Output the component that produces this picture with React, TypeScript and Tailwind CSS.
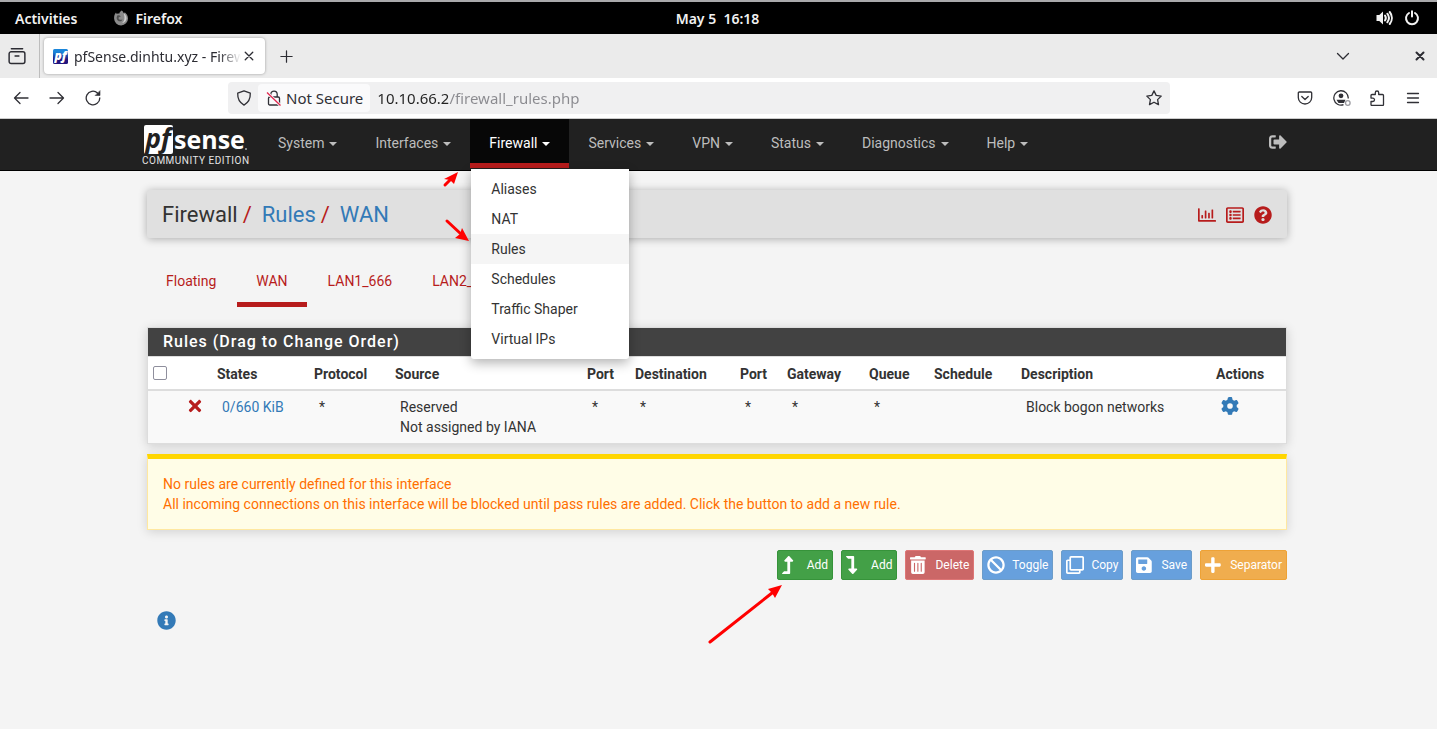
import type { ReactNode } from 'react';
import {
  FaBan,
  FaInfoCircle,
  FaLevelDownAlt,
  FaLevelUpAlt,
  FaPlus,
  FaQuestionCircle,
  FaRegChartBar,
  FaRegClone,
  FaRegListAlt,
  FaSave,
  FaSignOutAlt,
  FaTimes,
  FaTrashAlt,
} from 'react-icons/fa';
import { FaGear } from 'react-icons/fa6';

function Line({ children, size = 16, width = 1.3 }: { children: ReactNode; size?: number; width?: number }) {
  return (
    <svg
      width={size}
      height={size}
      viewBox="0 0 16 16"
      fill="none"
      stroke="currentColor"
      strokeWidth={width}
      strokeLinecap="round"
      strokeLinejoin="round"
      aria-hidden="true"
    >
      {children}
    </svg>
  );
}

function TopBar() {
  return (
    <header className="flex h-[34px] items-center border-t-2 border-[#a9a9ab] bg-black px-[15px] text-[14px] font-semibold text-[#f2f2f2]">
      <div className="flex flex-1 items-center gap-9">
        <button type="button">Activities</button>
        <button type="button" className="flex items-center gap-[6px]">
          <svg width="16" height="16" viewBox="0 0 16 16" aria-hidden="true">
            <path
              d="M8.6.6c1.2.8 1.8 1.7 2.1 2.8.6-.1.9-.6 1-1.100 1.800 1.500 3.300 3.400 3.300 6.100a6.900 6.900 0 0 1-13.900.2C1 6 1.700 4 3 2.600c.1.7.4 1.100.9 1.400.7-.4 1.500-.5 2.300-.3C6.500 2.500 7.300 1.400 8.600.6z"
              fill="#8b8b8b"
            />
            <path d="M10.500 3.200c1.700.9 3 2.500 3 4.900 0 3-2.300 5.100-5 5.100 2.900-1.300 4-5.300 2-10z" fill="#d0d0d0" />
            <path d="M4.300 5.400c1.300-.5 2.600-.1 3.600 1-1.500 0-1.700.9-2.500 1.300.1 1.800 2.300 2.800 4 1.500-.5 1.900-2.100 2.500-3.500 2-2.200-.8-2.900-3.600-1.600-5.800z" fill="#4c4c4c" />
          </svg>
          Firefox
        </button>
      </div>
      <button type="button">May 5&nbsp; 16:18</button>
      <div className="flex flex-1 items-center justify-end gap-[10px] pr-[2px]">
        <button type="button" aria-label="Volume">
          <svg width="18" height="16" viewBox="0 0 18 16" fill="none" stroke="currentColor" strokeWidth="2" strokeLinecap="round" aria-hidden="true">
            <path d="M.5 5h2.800L7 1.500v13L3.300 11H.5z" fill="currentColor" stroke="none" />
            <path d="M9 5.500c1 1.500 1 3.500 0 5M11.300 3.700c2 2.600 2 6 0 8.600M13.700 2c2.900 3.600 2.900 8.400 0 12" />
          </svg>
        </button>
        <button type="button" aria-label="Power">
          <Line width={2}>
            <path d="M5 3a6 6 0 1 0 6 0M8 1.200v5.300" />
          </Line>
        </button>
      </div>
    </header>
  );
}

function TabStrip() {
  return (
    <div className="flex h-11 items-center bg-[#ebebeb] text-[#2c2c33]">
      <button type="button" aria-label="View recent browsing" className="flex h-full w-10 items-center border-r border-[#bdbdbd] pl-2">
        <Line size={18}>
          <rect x="1" y="4.300" width="14" height="10.300" rx="1.700" />
          <path d="M3 1.500h10M6.300 8h3.400" />
        </Line>
      </button>
      <div className="ml-1 flex h-9 w-[221px] items-center rounded bg-white pr-[10px] pl-[9px] shadow-[0_0_3px_rgba(0,0,0,0.35)]">
        <svg width="15" height="15" viewBox="0 0 15 15" className="mr-[6px] shrink-0" aria-hidden="true">
          <defs>
            <linearGradient id="favicon" x1="0" y1="0" x2="0" y2="1">
              <stop offset="0.2" stopColor="#1b86da" />
              <stop offset="0.7" stopColor="#22157e" />
            </linearGradient>
          </defs>
          <rect width="15" height="15" rx="1.500" fill="url(#favicon)" />
          <text x="7.500" y="11" textAnchor="middle" fontFamily="Open Sans, sans-serif" fontSize="12" fontWeight="800" fontStyle="italic" fill="#fff">
            pf
          </text>
        </svg>
        <span className="min-w-0 flex-1 overflow-hidden text-[14px] whitespace-nowrap [mask-image:linear-gradient(to_left,transparent,black_22px)]">
          pfSense.dinhtu.xyz - Firewall
        </span>
        <button type="button" aria-label="Close tab" className="ml-[2px]">
          <Line size={12} width={1.800}>
            <path d="M3 3l10 10M13 3L3 13" />
          </Line>
        </button>
      </div>
      <button type="button" aria-label="New tab" className="ml-[14px]">
        <Line size={15}>
          <path d="M8 2v12M2 8h12" />
        </Line>
      </button>
      <button type="button" aria-label="List all tabs" className="mr-[62px] ml-auto">
        <Line size={16}>
          <path d="M2.500 5.500L8 11l5.500-5.500" />
        </Line>
      </button>
      <button type="button" aria-label="Close window" className="mr-[10px]">
        <Line size={14} width={2.300}>
          <path d="M4 4l8 8M12 4l-8 8" />
        </Line>
      </button>
    </div>
  );
}

function AddressBar() {
  return (
    <div className="flex h-[41px] items-center border-b border-[#ccc] bg-white pr-4 text-[15px] text-[#303036]">
      <div className="flex shrink-0 items-center gap-5 pl-[13px]">
        <button type="button" aria-label="Back">
          <Line>
            <path d="M15 8H1.500M7 2.500L1.500 8 7 13.500" />
          </Line>
        </button>
        <button type="button" aria-label="Forward">
          <Line>
            <path d="M1 8h13.500M9 2.500L14.500 8 9 13.500" />
          </Line>
        </button>
        <button type="button" aria-label="Reload">
          <Line>
            <path d="M14.800 8A6.800 6.800 0 1 1 12.500 2.900L14 4.300" />
            <path d="M15 1v4.500h-4.500z" fill="currentColor" strokeWidth="0.600" />
          </Line>
        </button>
      </div>
      <div className="ml-[127px] flex h-8 min-w-0 flex-1 items-center rounded bg-[#f0f0f1] pr-2 pl-2">
        <Line>
          <path d="M8 .8l6.300 2.300c.2 5.400-1.500 9.500-6.300 12C3.200 12.600 1.500 8.500 1.700 3.100z" />
        </Line>
        <button type="button" className="ml-[6px] flex h-7 items-center gap-1 rounded bg-[#fafafb] pr-[7px] pl-2">
          <svg width="16" height="16" viewBox="0 0 16 16" fill="none" stroke="currentColor" strokeWidth="1.300" aria-hidden="true">
            <rect x="2.500" y="7" width="11" height="8" rx="1.300" />
            <path d="M4.800 7V4.300a3.200 3.200 0 0 1 6.400 0V7" />
            <path d="M1 2.500L14.500 15.500" stroke="#fafafb" strokeWidth="3" />
            <path d="M1 2.500L14.500 15.500" stroke="#e22850" strokeWidth="1.300" />
          </svg>
          Not Secure
        </button>
        <input
          aria-label="Address"
          defaultValue="10.10.66.2/firewall_rules.php"
          className="ml-[7px] min-w-0 flex-1 bg-linear-to-r from-[#222] from-[71px] to-[#8a8a8f] to-[71px] bg-clip-text text-transparent outline-none"
        />
        <button type="button" aria-label="Bookmark this page">
          <Line>
            <path d="M8 .9l2.200 4.500 5 .7-3.600 3.500.9 5L8 12.200l-4.500 2.400.9-5L.8 6.100l5-.7z" />
          </Line>
        </button>
      </div>
      <div className="ml-[127px] flex shrink-0 items-center gap-5">
        <button type="button" aria-label="Save to Pocket">
          <Line>
            <path d="M2.300 2h11.400a1 1 0 0 1 1 1v4.500a6.700 6.500 0 0 1-13.400 0V3a1 1 0 0 1 1-1z" />
            <path d="M4.800 6.500L8 9.500l3.200-3" />
          </Line>
        </button>
        <button type="button" aria-label="Account">
          <svg width="18" height="16" viewBox="0 0 18 16" fill="none" stroke="currentColor" strokeWidth="1.300" className="-mr-[2px]" aria-hidden="true">
            <path d="M10.500 14.700A7.200 7.200 0 1 1 15.200 8.500" />
            <circle cx="8" cy="5.800" r="2.400" fill="currentColor" stroke="none" />
            <path d="M3.500 9.700h9l-1.500 3.200H5.500z" fill="currentColor" stroke="none" />
            <circle cx="14.800" cy="13" r="2.300" stroke="#9a9aa0" />
          </svg>
        </button>
        <button type="button" aria-label="Extensions">
          <Line>
            <path d="M6.300 4.500V2.700a1.700 1.700 0 0 1 3.400 0v1.800h3.800a1 1 0 0 1 1 1v9a1 1 0 0 1-1 1H3a1 1 0 0 1-1-1v-3h1.800a1.700 1.700 0 0 0 0-3.400H2V5.500a1 1 0 0 1 1-1z" />
          </Line>
        </button>
        <button type="button" aria-label="Open application menu">
          <Line size={16}>
            <path d="M2.500 3.500h11M2.500 8h11M2.500 12.500h11" />
          </Line>
        </button>
      </div>
    </div>
  );
}

const container = 'mx-auto max-w-[1140px]';
const menus = ['System', 'Interfaces', 'Firewall', 'Services', 'VPN', 'Status', 'Diagnostics', 'Help'];
const firewallItems = ['Aliases', 'NAT', 'Rules', 'Schedules', 'Traffic Shaper', 'Virtual IPs'];

function MenuButton({ label, active }: { label: string; active: boolean }) {
  return (
    <button
      type="button"
      className={
        active
          ? 'flex h-[49px] items-center gap-[5px] border-b-[5px] border-[#b71c1c] bg-[#070707] px-[19px] pt-1 text-white'
          : 'flex h-[49px] items-center gap-[5px] border-b-[5px] border-transparent px-[19px] pt-1 text-[#bdbdbd]'
      }
    >
      {label}
      <span className="mt-[2px] border-x-4 border-t-4 border-x-transparent border-t-current" />
    </button>
  );
}

function Navbar() {
  return (
    <nav className="border-b border-black bg-[#212121] pr-[3px] text-[14px]">
      <div className={container}>
        <div className="flex h-[51px] items-start">
          <a href="#home" className="-ml-[6px] block w-[118px] shrink-0 pt-[6px] text-white">
            <svg width="110" height="30" viewBox="0 0 110 30" fontFamily="Open Sans, sans-serif" fontWeight="700" fill="#fff" aria-hidden="true">
              <rect x="3" width="29" height="29" rx="2" />
              <text x="17" y="23" textAnchor="middle" fontSize="26" fontStyle="italic" fill="#212121">
                pf
              </text>
              <text x="33" y="24" fontSize="25">
                sense
              </text>
              <circle cx="105" cy="24" r="1" fill="#aaa" />
            </svg>
            <span className="block pl-px text-[10px] leading-[12px] tracking-wider whitespace-nowrap text-[#e4e4e4]">COMMUNITY EDITION</span>
          </a>
          <ul className="flex">
            {menus.map((m) => (
              <li key={m} className="relative">
                <MenuButton label={m} active={m === 'Firewall'} />
                {m === 'Firewall' && (
                  <ul className="absolute top-[50px] left-px z-20 w-[158px] rounded-b-[3px] bg-white py-[5px] shadow-[0_4px_12px_rgba(0,0,0,0.3)]">
                    {firewallItems.map((item) => (
                      <li key={item}>
                        <a
                          href="#menu"
                          className={
                            item === 'Rules'
                              ? 'block bg-[#f5f5f5] px-5 py-[5px] leading-5 text-[#333]'
                              : 'block px-5 py-[5px] leading-5 text-[#333]'
                          }
                        >
                          {item}
                        </a>
                      </li>
                    ))}
                  </ul>
                )}
              </li>
            ))}
          </ul>
          <a href="#logout" aria-label="Log out" className="mt-[14px] ml-auto text-[18px] text-[#bdbdbd]">
            <FaSignOutAlt />
          </a>
        </div>
      </div>
    </nav>
  );
}

function PageHeader() {
  return (
    <header className="flex h-12 items-center justify-between rounded-[2px] bg-[#e0e0e0] px-[15px] pt-[2px] shadow-[0_1px_8px_rgba(0,0,0,0.3)]">
      <ol className="flex text-[22px] text-[#333]">
        <li>
          Firewall<span className="mr-[10px] ml-[5px] text-[#b71c1c]">/</span>
        </li>
        <li>
          <a href="#rules" className="text-[#337ab7]">
            Rules
          </a>
          <span className="mr-[10px] ml-[5px] text-[#b71c1c]">/</span>
        </li>
        <li>
          <a href="#wan" className="text-[#337ab7]">
            WAN
          </a>
        </li>
      </ol>
      <div className="flex gap-[10px] text-[18px] text-[#b71c1c]">
        <a href="#status" aria-label="Related status">
          <FaRegChartBar />
        </a>
        <a href="#log" aria-label="Related log entries">
          <FaRegListAlt />
        </a>
        <a href="#help" aria-label="Help">
          <FaQuestionCircle />
        </a>
      </div>
    </header>
  );
}

function InterfaceTabs() {
  return (
    <ul className="mt-[18px] flex text-[#b71c1c]">
      {['Floating', 'WAN', 'LAN1_666', 'LAN2_668'].map((t) => (
        <li key={t} className="mr-[2px]">
          <a
            href="#tab"
            className={
              t === 'WAN'
                ? 'flex h-[51px] items-center border-b-[5px] border-[#b71c1c] px-[19px] pt-1'
                : 'flex h-[51px] items-center border-b-[5px] border-transparent px-[19px] pt-1'
            }
          >
            {t}
          </a>
        </li>
      ))}
    </ul>
  );
}

function RulesTable() {
  const head = ['States', 'Protocol', 'Source', 'Port', 'Destination', 'Port', 'Gateway', 'Queue', 'Schedule', 'Description', 'Actions'];
  return (
    <section className="mt-5 border border-[#ddd] bg-white shadow-[0_2px_10px_rgba(0,0,0,0.16)]">
      <h2 className="h-7 bg-[#424242] px-[15px] text-[16px] leading-[27px] font-medium tracking-[1px] text-white">
        Rules (Drag to Change Order)
      </h2>
      <table className="w-full table-fixed border-t border-[#ddd] text-left text-[#333]">
        <colgroup>
          <col className="w-[30px]" />
          <col className="w-[34px]" />
          <col className="w-[97px]" />
          <col className="w-[81px]" />
          <col className="w-[192px]" />
          <col className="w-[48px]" />
          <col className="w-[105px]" />
          <col className="w-[47px]" />
          <col className="w-[82px]" />
          <col className="w-[65px]" />
          <col className="w-[87px]" />
          <col className="w-[195px]" />
          <col className="w-[75px]" />
        </colgroup>
        <thead>
          <tr className="h-[33px] border-b-2 border-[#ddd]">
            <th className="px-[5px]">
              <input
                type="checkbox"
                aria-label="Select all rules"
                className="block size-[14px] appearance-none rounded-[2px] border border-[#8f8f9d] bg-white"
              />
            </th>
            <th aria-label="Rule state" />
            {head.map((h, i) => (
              <th key={i} className="px-[5px] pt-[2px] font-bold">
                {h}
              </th>
            ))}
          </tr>
        </thead>
        <tbody>
          <tr className="bg-[#f9f9f9] align-top">
            <td />
            <td className="px-[8px] pt-[6px] text-[18px] text-[#b71c1c]">
              <FaTimes title="Traffic is blocked" />
            </td>
            <td className="px-[10px] py-[6px]">
              <a href="#states" className="text-[#337ab7]">
                0/660 KiB
              </a>
            </td>
            <td className="px-[10px] py-[6px]">*</td>
            <td className="px-[10px] py-[6px]">
              Reserved
              <br />
              Not assigned by IANA
            </td>
            <td className="px-[10px] py-[6px]">*</td>
            <td className="px-[10px] py-[6px]">*</td>
            <td className="px-[10px] py-[6px]">*</td>
            <td className="px-[10px] py-[6px]">*</td>
            <td className="px-[10px] py-[6px]">*</td>
            <td />
            <td className="px-[10px] py-[6px]">Block bogon networks</td>
            <td className="px-[10px] py-[6px]">
              <a href="#settings" aria-label="Settings" className="block text-[18px] text-[#337ab7]">
                <FaGear />
              </a>
            </td>
          </tr>
        </tbody>
      </table>
    </section>
  );
}

const green = 'flex h-[30px] items-center rounded-[2px] border border-[#36933a] bg-[#43a047] px-1 pt-px text-[12px] text-white';
const blue = 'flex h-[30px] items-center rounded-[2px] border border-[#6c9cc9] bg-[#67a0dd] px-1 pt-px text-[12px] text-white';
const red = 'flex h-[30px] items-center rounded-[2px] border border-[#de7676] bg-[#cb6767] px-1 pt-px text-[12px] text-white';
const amber = 'flex h-[30px] items-center rounded-[2px] border border-[#eea236] bg-[#f0ad4e] px-1 pt-px text-[12px] text-white';

function ActionButtons() {
  const align = 'xMinYMid meet';
  const buttons: { label: string; icon: ReactNode; className: string }[] = [
    { label: 'Add', icon: <FaLevelUpAlt preserveAspectRatio={align} />, className: green },
    { label: 'Add', icon: <FaLevelDownAlt preserveAspectRatio={align} />, className: green },
    { label: 'Delete', icon: <FaTrashAlt preserveAspectRatio={align} />, className: red },
    { label: 'Toggle', icon: <FaBan preserveAspectRatio={align} />, className: blue },
    { label: 'Copy', icon: <FaRegClone preserveAspectRatio={align} />, className: blue },
    { label: 'Save', icon: <FaSave preserveAspectRatio={align} />, className: blue },
    { label: 'Separator', icon: <FaPlus preserveAspectRatio={align} />, className: amber },
  ];
  return (
    <div className="mt-5 flex justify-end gap-2">
      {buttons.map((b, i) => (
        <button key={i} type="button" className={b.className}>
          <span className="mr-[7px] text-[18px]">{b.icon}</span>
          {b.label}
        </button>
      ))}
    </div>
  );
}

function Arrows() {
  return (
    <svg className="pointer-events-none absolute top-0 left-0 z-30 h-full w-full" fill="#f00" stroke="#f00" strokeLinecap="round" aria-hidden="true">
      <path d="M445 66L451 60" strokeWidth="3" />
      <path d="M458 53L454 65L450 61L444 60Z" stroke="none" />
      <path d="M447 102L461 115" strokeWidth="3" />
      <path d="M469 122L455 119L460 115L462 109Z" stroke="none" />
      <path d="M710 523L772 474" strokeWidth="3" />
      <path d="M782 466L775 479L772 474L768 470Z" stroke="none" />
    </svg>
  );
}

export default function App() {
  return (
    <div className="flex min-h-screen flex-col bg-[#f4f4f4] font-['Noto_Sans',sans-serif]">
      <TopBar />
      <TabStrip />
      <AddressBar />
      <div className="relative flex-1 font-[Roboto,sans-serif] text-[14px] leading-5">
        <Navbar />
        <main className="pt-[19px] pr-[3px]">
          <div className={container}>
            <PageHeader />
            <InterfaceTabs />
            <RulesTable />
            <div className="mt-[10px] border border-t-[5px] border-[#ffe8a0] border-t-[#ffd600] bg-[#fffde7] px-[15px] py-[15px] text-[#ff6f00] shadow-[0_2px_10px_rgba(0,0,0,0.14)]">
              <p>
                No rules are currently defined for this interface
                <br />
                All incoming connections on this interface will be blocked until pass rules are added. Click the button to add a new rule.
              </p>
            </div>
            <ActionButtons />
            <button type="button" aria-label="Show information" className="mt-[31px] ml-[10px] block text-[19px] text-[#337ab7]">
              <FaInfoCircle />
            </button>
          </div>
        </main>
        <Arrows />
      </div>
    </div>
  );
}
